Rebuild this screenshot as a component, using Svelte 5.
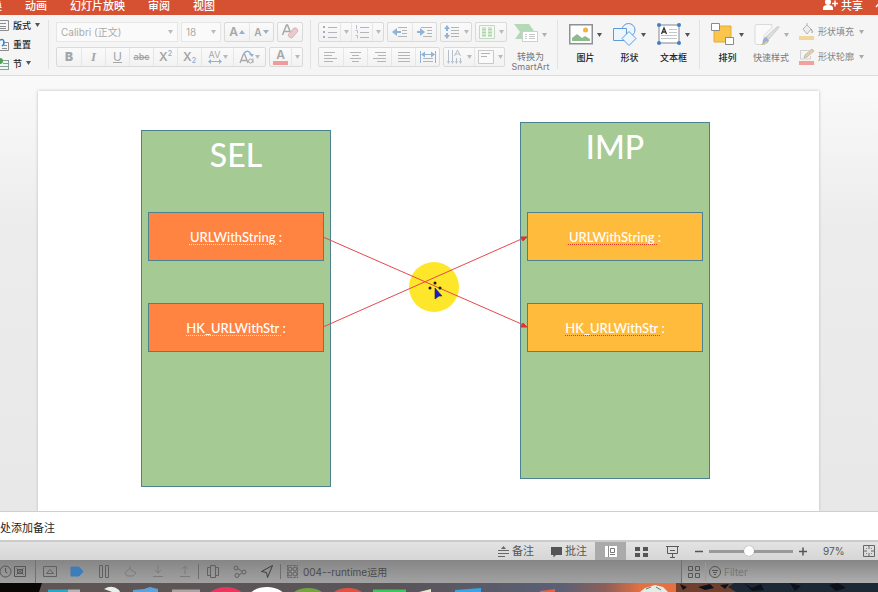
<script>
  let fontName = $state('Calibri (正文)');
  let fontSize = $state('18');
  let zoom = $state(47);
  let notes = $state('处添加备注');
  let filter = $state('');

  const tabs = ['切换', '动画', '幻灯片放映', '审阅', '视图'];

  const line = (y, a, b) => `<path d="M${a} ${y}H${b}" stroke="#b4b4b4"/>`;
  const lines = (rows) => rows.map(([y, a, b]) => line(y, a, b)).join('');
  const blue = '#8fb4d6';

  const alignTools = [
    { name: '左对齐', art: lines([[4.5, 2, 13], [7.5, 2, 10], [10.5, 2, 15], [13.5, 2, 11]]) },
    { name: '居中', art: lines([[4.5, 3, 14], [7.5, 5, 12], [10.5, 3, 14], [13.5, 5, 12]]) },
    { name: '右对齐', art: lines([[4.5, 4, 15], [7.5, 7, 15], [10.5, 2, 15], [13.5, 6, 15]]) },
    { name: '两端对齐', art: lines([[4.5, 3, 15], [7.5, 3, 15], [10.5, 3, 15], [13.5, 3, 15]]) },
    {
      name: '分散对齐',
      art: `<path d="M1.5 3v12M16.5 3v12M3 6.500h12" stroke="${blue}"/><path d="M2 6.500l4-3v6zM16 6.500l-4-3v6z" fill="${blue}"/>${lines([[10.5, 4, 14], [13.5, 4, 14]])}`
    }
  ];
  const bullets = `<path d="M2 3h2v2H2zM2 8h2v2H2zM2 13h2v2H2z" fill="#9fb0c4"/>${lines([[4.5, 7, 16], [9.5, 7, 16], [14.5, 7, 16]])}`;
  const numbers = `<path d="M3.500 2v4M2.500 7.500h2v3M2.500 12.500h2v3" stroke="#b4c0cf" fill="none"/>${lines([[4.5, 7, 16], [9.5, 7, 16], [14.5, 7, 16]])}`;
  const outdent = `<path d="M1 9l5-4v3h4v2H6v3z" fill="${blue}"/>${lines([[4.5, 7, 16], [7.5, 11, 16], [10.5, 11, 16], [13.5, 7, 16]])}`;
  const indent = `<path d="M9 9L4 5v3H1v2h3v3z" fill="${blue}"/>${lines([[4.5, 5, 16], [7.5, 11, 16], [10.5, 11, 16], [13.5, 7, 16]])}`;
  const spacing = `<path d="M4 2l3 4H5v2H3V6H1zM4 16l3-4H5v-2H3v2H1z" fill="${blue}"/>${lines([[4.5, 8, 16], [7.5, 8, 16], [10.5, 8, 16], [13.5, 8, 16]])}`;
  const columns = `<path d="M1.500 2.500h15v13h-15z" fill="#f4faf3" stroke="#c6d6c4"/><path d="M4 4h4v10H4zM10 4h4v10h-4z" fill="#cfe8cc"/><path d="M4 6.500h4M10 6.500h4M4 9.500h4M10 9.500h4M4 12.500h4M10 12.500h4" stroke="#b0d6ac"/>`;
  const direction = `<path d="M2.500 2v13M6.500 2v13M10.500 10v5M14.500 10v5M8.500 8l3-6 3 6M9.500 6h4" stroke="#b4bfcc" fill="none"/><path d="M1 13h3l-1.500 3zM5 13h3l-1.500 3zM9 13h3l-1.500 3zM13 13h3l-1.500 3z" fill="#b4bfcc"/>`;
  const anchor = `<path d="M1.500 2.500h15v13h-15z" fill="#fafafa" stroke="#c8c8c8"/>${lines([[5.5, 4, 13], [8.5, 4, 10]])}`;

  const insertTools = [
    {
      name: '图片',
      art: '<path d="M.75 1.750h22.500v19H.75z" fill="#fff" stroke="#8d9299" stroke-width="1.500"/><path d="M3 18v-3l5-4 5 4 3-2 5 3v2z" fill="#8fba8d"/><circle cx="16.500" cy="7" r="2.500" fill="#f3b23a"/>'
    },
    {
      name: '形状',
      art: '<g fill="#eef6fd" stroke="#5b9bd8"><circle cx="15.500" cy="7" r="6.500"/><path d="M.5 5.500h13v12H.5z"/><path d="M16 8.500l7 7-7 7-7-7z"/></g>'
    },
    {
      name: '文本框',
      art: '<path d="M2 2h20v18H2z" fill="#fff" stroke="#7b8794"/><path d="M12 6.500h8M12 9.500h8M4 12.500h16M4 15.500h16" stroke="#c4c8cc"/><path d="M4.500 11l2.500-6 2.500 6M5.500 9h3" stroke="#333" fill="none" stroke-width="1.300"/><g fill="#3f7fc4"><circle cx="2" cy="2" r="2"/><circle cx="22" cy="2" r="2"/><circle cx="2" cy="20" r="2"/><circle cx="22" cy="20" r="2"/></g>'
    }
  ];
  const arrange = '<path d="M3 3h17v16H3z" fill="#fac54d" stroke="#e6ac35"/><path d="M.5.5h8v7h-8zM14.500 14.500h8v7h-8z" fill="#fff" stroke="#8b8b8b"/>';
  const quick = '<path d="M3 1.500h15q-1 2 0 3l-8 8v9H3q-2 0-2-2v-16q0-2 2-2z" fill="#fafafa" stroke="#dadada"/><path d="M25 4.500L15 16l-3-2L23 4q2-1 2 .5z" fill="#dcdfdc" stroke="#c8ccc8"/><path d="M12 14l3 3q-1 5-8 5 2-2 2-5 1-3 3-3z" fill="#9bb0d6"/><path d="M7 22q3-1 5-4l2 1q-2 3-7 3z" fill="#e6cf7e"/>';
  const smart = '<path d="M0 1h15l5 7-5 2H9v6H1l5-7z" fill="#b4d9b6"/><path d="M8.500 8.500h15v10h-15z" fill="#fff" stroke="#cfcfcf"/><path d="M11 11.500h2M15 11.500h6M11 13.500h2M15 13.500h6M11 15.500h2M15 15.500h6" stroke="#c8c8c8"/>';

  const debugTools = [
    { name: '显示调试区', art: '<path d="M.5 2.500h13v10H.5z"/><path d="M3.500 9.500h7l-3.500-4z"/>' },
    { name: '断点', art: '<path d="M1 3h8l4 4.500L9 12H1z" fill="#3d7db8" stroke="#3d7db8"/>' },
    { name: '暂停', art: '<path d="M2.500 1.500h3v12h-3zM8.500 1.500h3v12h-3z"/>' },
    { name: '单步跳过', dim: true, art: '<path d="M1 9l5-5 1 2 5 3-3 3H3zM6 2v2"/>' },
    { name: '单步进入', dim: true, art: '<path d="M7 1v8M4 6l3 3 3-3M2 12.500h10"/>' },
    { name: '单步跳出', dim: true, art: '<path d="M7 10V2M4 5l3-3 3 3M2 12.500h10"/>' }
  ];
  const inspectTools = [
    { name: '视图层级', art: '<path d="M4.500 1.500h5v12h-5zM4 3.500H1.500v8H4M10 3.500h2.500v8H10"/>' },
    { name: '内存图', art: '<circle cx="3" cy="4" r="2"/><circle cx="11" cy="8" r="2"/><circle cx="4" cy="11.500" r="2"/><path d="M5 4.500l4 3M6 11l3-2"/>' },
    { name: '模拟位置', dark: true, art: '<path d="M12.500 1.500L1.500 7.500l5 1 1 5z"/>' }
  ];
</script>

{#snippet icon(art, w = 18, h = 18)}
  <svg width={w} height={h} viewBox="0 0 {w} {h}" fill="none" aria-hidden="true">{@html art}</svg>
{/snippet}

{#snippet caret()}
  <svg class="caret" width="5" height="4" viewBox="0 0 5 4" aria-hidden="true"><path d="M0 0h5L2.500 4z" fill="currentColor" /></svg>
{/snippet}

{#snippet big(name, art, w, off = false)}
  <button class="big" class:off>
    <span class="art">{@render icon(art, w, 23)}{@render caret()}</span>
    <span>{name}</span>
  </button>
{/snippet}

<div class="app">
  <header>
    <nav>
      {#each tabs as tab}<a href="#{tab}">{tab}</a>{/each}
    </nav>
    <button class="share">
      <svg width="15" height="12" viewBox="0 0 15 12" aria-hidden="true"><circle cx="5" cy="3" r="3" fill="#fff" /><path d="M0 11V9q0-3 5-3t5 3v2z" fill="#fff" /><path d="M9 4.500h6M12 1.500v6" stroke="#fff" stroke-width="1.500" /></svg>
      共享
    </button>
    <svg class="fold" width="9" height="8" viewBox="0 0 9 8" aria-hidden="true"><path d="M1 6l3.500-4L8 6" fill="none" stroke="#fff" stroke-width="1.500" /></svg>
  </header>

  <div class="ribbon">
    <div class="slides">
      <button>{@render icon('<path d="M0 1.500h8.500v10H0M0 4.500h6M0 7.500h6M0 9.500h6" stroke="#8d8d8d"/>', 9, 13)}版式{@render caret()}</button>
      <button>{@render icon('<path d="M3 4.500h5.500v8H0M4 7.500h3M2 10.500h5" stroke="#8d8d8d"/><path d="M0 2q4-2 4 3 0 2-2 3" stroke="#2c7fd0" stroke-width="1.500"/>', 9, 13)}重置</button>
      <button>{@render icon('<path d="M3 3.500h5.500M3 6.500h5.500M0 9.500h8.500M0 12.500h8.500M8.500 3v10" stroke="#7ba59a"/><circle cx="0" cy="4" r="3" fill="#4e9e55"/>', 9, 13)}节{@render caret()}</button>
    </div>
    <hr />

    <div class="tools">
      <div class="row">
        <label class="pick wide"><select bind:value={fontName} aria-label="字体"><option>Calibri (正文)</option></select>{@render caret()}</label>
        <label class="pick size"><select bind:value={fontSize} aria-label="字号"><option>18</option></select>{@render caret()}</label>
        <div class="set">
          <button class="letter" aria-label="增大字号">A<svg width="6" height="4" viewBox="0 0 6 4"><path d="M0 4h6L3 0z" fill="#8fb4d6" /></svg></button>
          <button class="letter small" aria-label="减小字号">A<svg width="6" height="4" viewBox="0 0 6 4"><path d="M0 0h6L3 4z" fill="#9fb0c4" /></svg></button>
        </div>
        <div class="set"><button aria-label="清除格式">{@render icon('<path d="M1.500 12L5.500 2h1l4 10M3 8.500h6" stroke="#a8a8a8" stroke-width="1.500"/><path d="M7 12l6-7q3-1 4 3l-6 7q-3 0-4-3z" fill="#ecc9cc" stroke="#d9b3b6"/>')}</button></div>
      </div>
      <div class="row">
        <div class="set">
          <button class="letter"><b>B</b></button>
          <button class="letter serif"><i>I</i></button>
          <button class="letter"><u>U</u></button>
          <button class="letter tiny"><s>abc</s></button>
          <button class="letter">X<sup>2</sup></button>
          <button class="letter">X<sub>2</sub></button>
          <button class="letter drop" aria-label="字符间距"><span class="av">AV{@render icon('<path d="M2 2.500h10" stroke="#8fb4d6"/><path d="M0 2.500L3 0v5zM14 2.500L11 0v5z" fill="#8fb4d6"/>', 14, 5)}</span>{@render caret()}</button>
          <button class="letter drop" aria-label="更改大小写">{@render icon('<path d="M1 14L4.500 5h1L9 14M2 11.500h6" stroke="#a8a8a8" stroke-width="1.300"/><path d="M5 4q4-4 7 1" stroke="#8fb4d6" stroke-width="1.500"/><path d="M10 5h5l-2 3z" fill="#8fb4d6"/><circle cx="11.500" cy="12" r="2" stroke="#a8a8a8"/><path d="M14 9.500V14" stroke="#a8a8a8"/>', 15, 16)}{@render caret()}</button>
        </div>
        <div class="set"><button class="letter split" aria-label="字体颜色"><span class="ink">A</span></button><button class="arrow" aria-label="更多颜色">{@render caret()}</button></div>
      </div>
    </div>
    <hr />

    <div class="tools">
      <div class="row">
        <div class="set">
          <button class="narrow" aria-label="项目符号">{@render icon(bullets)}</button><button class="arrow" aria-label="更多符号">{@render caret()}</button>
          <button class="narrow" aria-label="编号">{@render icon(numbers)}</button><button class="arrow" aria-label="更多编号">{@render caret()}</button>
        </div>
        <div class="set">
          <button aria-label="减少缩进">{@render icon(outdent)}</button>
          <button aria-label="增加缩进">{@render icon(indent)}</button>
        </div>
        <div class="set"><button class="drop" aria-label="行距">{@render icon(spacing)}{@render caret()}</button></div>
        <div class="set"><button class="drop" aria-label="分栏">{@render icon(columns)}{@render caret()}</button></div>
      </div>
      <div class="row">
        <div class="set">
          {#each alignTools as t}<button aria-label={t.name}>{@render icon(t.art)}</button>{/each}
        </div>
        <div class="set">
          <button class="drop" aria-label="文字方向">{@render icon(direction)}{@render caret()}</button>
          <button class="drop" aria-label="对齐文本">{@render icon(anchor)}{@render caret()}</button>
        </div>
      </div>
    </div>
    <button class="big off smart">
      <span class="art">{@render icon(smart, 24, 23)}{@render caret()}</span>
      <span>转换为<br />SmartArt</span>
    </button>
    <hr />

    <div class="group">
      {#each insertTools as t}{@render big(t.name, t.art, 24)}{/each}
    </div>
    <hr />

    <div class="group tight">
      {@render big('排列', arrange, 24)}
      {@render big('快速样式', quick, 26, true)}
    </div>
    <div class="paint">
      <button>{@render icon('<path d="M4 6l4-4 4 4-4 5zM8 2V0" fill="#eee" stroke="#b5b5b5"/><path d="M12 6q2 2 1 4" stroke="#8b9aa8"/><path d="M0 13h15v4H0z" fill="#f2d79b"/>', 15, 17)}形状填充{@render caret()}</button>
      <button>{@render icon('<path d="M2 2.500h9M1.500 2v9h10V8" stroke="#d2d2d2"/><path d="M5 10l1-3 7-6 2 2-7 6z" fill="#e6cdb0" stroke="#c9bbac"/><path d="M0 13h15v4H0z" fill="#f1a09a"/>', 15, 17)}形状轮廓{@render caret()}</button>
    </div>
  </div>

  <main>
    <div class="slide">
      <div class="column sel"><h2>SEL</h2></div>
      <div class="column imp"><h2>IMP</h2></div>
      <div class="node a"><p><span>URLWithString&nbsp;</span>:</p></div>
      <div class="node b"><p><span>HK_URLWithStr&nbsp;</span>:</p></div>
      <div class="node c"><p><span>URLWithString&nbsp;</span>:</p></div>
      <div class="node d"><p><span>HK_URLWithStr&nbsp;</span>:</p></div>
      <svg class="wires" width="781" height="420" viewBox="0 0 781 420" aria-hidden="true">
        <circle cx="396" cy="196" r="25" fill="#fee62b" />
        <g stroke="#e5484d" fill="none"><path d="M285 146l203 89M285 236l203-90" /></g>
        <path d="M489 236l-4-4-2 4zM489 146l-6 0 2 4z" fill="#e0322f" stroke="#e0322f" />
        <g fill="#1c1c1c"><circle cx="397" cy="192" r="1.500" /><circle cx="392" cy="197" r="1.500" /><circle cx="402" cy="197" r="1.500" /></g>
        <path d="M397 197l7 8-3 0-4 3z" fill="#1520c8" stroke="#1c1c6a" stroke-width=".6" />
      </svg>
    </div>
  </main>

  <textarea class="notes" aria-label="备注" rows="1" bind:value={notes}></textarea>

  <footer>
    <button class="text">{@render icon('<path d="M0 5.500h11M0 8.500h11M0 11.500h7" stroke="#666"/><path d="M3 4l2.500-3L8 4z" fill="#666"/>', 11, 13)}备注</button>
    <button class="text">{@render icon('<path d="M0 2h11v8H5l-2.500 2.500V10H0z" fill="#555"/>', 11, 13)}批注</button>
    <div class="views">
      <button class="on" aria-label="普通视图">{@render icon('<path d="M0 1h12v11H0z" fill="#fff"/><path d="M3.500 1v11" stroke="#8d8d8d"/><path d="M5.500 3.500h4v4h-4zM5 9.500h5" stroke="#777"/>', 12, 13)}</button>
      <button aria-label="幻灯片浏览">{@render icon('<path d="M0 2h5v4H0zM8 2h5v4H8zM0 8h5v4H0zM8 8h5v4H8z" fill="#555"/>', 13, 13)}</button>
      <button aria-label="放映">{@render icon('<path d="M0 1.500h13M1.500 2v6.500h10V2M4 5.500h5M6.500 9v3M4 12.500h5" stroke="#5a5a5a"/>', 13, 13)}</button>
    </div>
    <div class="zoom">
      <button aria-label="缩小">{@render icon('<path d="M0 4.500h8" stroke="#555" stroke-width="1.500"/>', 8, 9)}</button>
      <input type="range" aria-label="缩放" min="0" max="100" bind:value={zoom} />
      <button aria-label="放大">{@render icon('<path d="M0 4.500h8M4 .5v8" stroke="#555" stroke-width="1.500"/>', 8, 9)}</button>
    </div>
    <span class="percent">97%</span>
    <button aria-label="适应窗口">{@render icon('<path d="M.5.5h11v11H.5zM6 1v3M6 8v3M1 6h3M8 6h3" stroke="#666"/><path d="M3 3l1 1M9 3L8 4M3 9l1-1M9 9L8 8" stroke="#888"/>', 12, 12)}</button>
  </footer>

  <div class="debug">
    <div class="nav">
      {@render icon('<circle cx="5.500" cy="7.500" r="5.500" stroke="#555"/><path d="M5.500 4v4l2 1" stroke="#555"/>', 12, 15)}
      {@render icon('<path d="M.5 2.500h11v10H.5zM2.500 4.500l7 6M9.500 4.500l-7 6M3.500 5.500h5v4h-5z" stroke="#555"/>', 12, 15)}
    </div>
    <div class="cells">{#each debugTools as t}<button class:dim={t.dim} aria-label={t.name}>{@render icon(t.art, 14, 15)}</button>{/each}</div>
    <div class="cells ruled">{#each inspectTools as t}<button class:dark={t.dark} aria-label={t.name}>{@render icon(t.art, 14, 15)}</button>{/each}</div>
    <div class="process">
      {@render icon('<path d="M1.500 1.500h10v12h-10z" stroke-dasharray="2 1"/><circle cx="4" cy="5" r="2"/><circle cx="9" cy="5" r="2"/><circle cx="4" cy="10" r="2"/><circle cx="9" cy="10" r="2"/>', 13, 15)}
      <span>004--runtime运用</span>
    </div>
    <div class="library">
      {@render icon('<path d="M.5 1.500h4v4h-4zM7.500 1.500h4v4h-4zM.5 8.500h4v4h-4zM7.500 8.500h4v4h-4z" stroke="#555"/>', 12, 14)}
      <label>
        {@render icon('<circle cx="6" cy="6" r="5.500" stroke="#555"/><path d="M3 4.500h6M4 6.500h4M5 8.500h2" stroke="#555"/>', 12, 12)}
        <input type="text" placeholder="Filter" aria-label="Filter" bind:value={filter} />
      </label>
    </div>
  </div>

  <svg class="dock" viewBox="0 0 878 9" preserveAspectRatio="none" aria-hidden="true">
    <defs>
      <linearGradient id="desk"><stop offset="0" stop-color="#5f5553" /><stop offset=".45" stop-color="#5a5459" /><stop offset=".64" stop-color="#5b6076" /><stop offset=".69" stop-color="#8c5f58" /><stop offset=".73" stop-color="#e57142" /></linearGradient>
    </defs>
    <path d="M0 0h878v9H0z" fill="url(#desk)" />
    <path d="M0 0h42l-3 9H0z" fill="#090807" />
    <path d="M676 0h202v9H676z" fill="#1d2837" />
    <path d="M676 0h58l-6 4 8 5h-60z" fill="#70402f" />
    <path d="M680 1l7 3-4 3zM698 4l12-3 4 4-9 2zM720 2l9-1-4 5zM744 0l8 5 9-4 3 6-12 1zM790 0l11 3-6 5zM829 2l9-2 8 5-10 3z" fill="#0d1119" />
    <path d="M48 6.500h20V9H48z" fill="#28a7c9" /><path d="M68 6.500h12V9H68z" fill="#b4b4b4" />
    <path d="M104 6q8-5 15 1l1 2h-8z" fill="#eceff0" />
    <path d="M133 7l11-1 6-2 8 2v3h-25z" fill="#5ba3dc" />
    <path d="M172 6.500h28V9h-28z" fill="#aaa5a4" />
    <ellipse cx="226" cy="16" rx="19" ry="12" fill="#ed365f" />
    <ellipse cx="267" cy="16" rx="19" ry="12" fill="#fff" />
    <ellipse cx="308" cy="16" rx="18" ry="11" fill="#73a441" />
    <ellipse cx="348" cy="16" rx="18" ry="11" fill="#e35240" />
    <path d="M373 6.500h33V9h-33z" fill="#39c85b" />
    <path d="M419 9l12-3v3z" fill="#ebe8c8" />
    <path d="M455 7l26-2v4h-26z" fill="#38a6e6" />
    <path d="M540 8l15-2v3h-15z" fill="#e66242" />
    <path d="M640 9l5-4 10-3 8 2 5 5z" fill="#e7ebe5" /><path d="M646 6l5-2M656 4l5 3" stroke="#5b7e73" />
  </svg>
</div>

<style>
  :global(body) { margin: 0; }
  .app {
    display: flex; flex-direction: column; height: 100vh; overflow: hidden;
    font-family: Inter, "Noto Sans CJK SC", sans-serif; font-size: 9px; color: #333;
  }
  button { display: flex; align-items: center; justify-content: center; margin: 0; padding: 0; border: 0; background: none; font: inherit; color: inherit; white-space: nowrap; }
  svg { display: block; flex: none; }

  header { display: flex; align-items: center; flex: none; height: 15px; padding-bottom: 6px; box-sizing: border-box; background: #d65131; color: #fff; overflow: hidden; font-size: 11px; font-weight: 500; }
  nav { display: flex; gap: 23px; margin-left: -20px; margin-right: auto; }
  nav a { color: inherit; text-decoration: none; white-space: nowrap; }
  .share { gap: 3px; }
  .fold { margin: 0 -6px 0 12px; }

  .ribbon { display: flex; flex: none; align-items: center; height: 58px; padding-bottom: 2px; background: #f5f5f5; border-bottom: 1px solid #dcdcdc; overflow: hidden; }
  hr { flex: none; width: 1px; height: 49px; margin: 0 7px; border: 0; background: #e2e2e2; }
  .slides { display: flex; flex-direction: column; gap: 6px; width: 41px; flex: none; color: #222; font-weight: 500; }
  .slides button { gap: 4px; justify-content: flex-start; height: 13px; }
  .caret { color: #555; }
  .tools { display: flex; flex-direction: column; gap: 5px; flex: none; }
  .tools .caret { color: #bababa; }
  .row { display: flex; gap: 3px; }
  .set { display: flex; height: 20px; box-sizing: border-box; border: 1px solid #dadada; border-radius: 2px; background: linear-gradient(#fafafa, #f2f2f2); }
  .set button { width: 24px; border-left: 1px solid #e6e6e6; box-sizing: border-box; }
  .set button:first-child { border-left: 0; }
  .set .narrow { width: 21px; }
  .set .arrow { width: 11px; }
  .set .drop { width: 30px; gap: 3px; }
  .set .letter.drop { width: 32px; }
  .pick { display: flex; align-items: center; height: 20px; box-sizing: border-box; padding: 0 4px; border: 1px solid #e6e6e6; background: #fafafa; }
  .pick select { flex: 1; min-width: 0; appearance: none; border: 0; padding: 0; background: none; font: inherit; font-size: 10px; color: #ababab; }
  .wide { width: 122px; }
  .size { width: 40px; }
  .letter { color: #a6a6a6; font-size: 12px; font-weight: 600; }
  .set .letter.split { width: 21px; }
  .small { font-size: 10px; }
  .letter:has(> svg:last-child) { gap: 1px; }
  .tiny { font-size: 9px; }
  .serif { font-family: "Liberation Serif", serif; font-size: 13px; }
  .letter sup, .letter sub { font-size: 7px; line-height: 7px; color: #8fb4d6; }
  .letter sup { align-self: flex-start; margin-top: 2px; }
  .letter sub { align-self: flex-end; margin-bottom: 2px; }
  .letter u { font-weight: 400; }
  .av { display: flex; flex-direction: column; align-items: center; font-size: 9px; line-height: 9px; font-weight: 400; }
  .ink { width: 15px; line-height: 12px; border-bottom: 4px solid #f19a9c; }

  .big { flex-direction: column; align-self: flex-start; justify-content: flex-start; padding-top: 8px; color: #222; font-weight: 500; line-height: 11px; gap: 6px; }
  .big .art { display: flex; align-items: center; gap: 4px; }
  .off { color: #777; font-weight: 400; }
  .off .caret { color: #b0b0b0; }
  .smart { width: 39px; margin-left: 4px; line-height: 10px; }
  .group { display: flex; align-self: flex-start; gap: 11px; margin: 0 2px 0 4px; }
  .tight { gap: 9px; }
  .paint { display: flex; flex-direction: column; gap: 8px; margin-left: 8px; color: #858585; }
  .paint button { gap: 4px; }
  .paint .caret { color: #aaa; margin-left: 1px; }

  main { flex: 1; min-height: 0; display: flex; padding: 15px 59px 0 38px; background: linear-gradient(#fafafa, #ececec 35%, #e8e8e8); overflow: hidden; }
  .slide { flex: 1; position: relative; background: #fff; box-shadow: 0 0 3px #bbb; }
  .column, .node { position: absolute; box-sizing: border-box; border: 1px solid #4b8191; font-family: Lato, sans-serif; color: #fff; }
  .column { width: 190px; height: 357px; background: #a5ca94; }
  .column h2 { margin: 4px 0 0; text-align: center; font-size: 32px; line-height: 40px; font-weight: 500; }
  .sel { left: 103px; top: 39px; }
  .imp { left: 482px; top: 31px; }
  .node { display: flex; align-items: center; justify-content: center; width: 176px; height: 49px; font-size: 13px; font-weight: 500; }
  .node p { margin: 0; line-height: 18px; }
  .node span { text-decoration: underline dotted #e8392f 1px; text-underline-offset: 2px; text-decoration-skip-ink: none; }
  .a, .b { left: 110px; background: #ff8341; }
  .a span, .b span { text-decoration-color: #ffd9cc; }
  .c, .d { left: 489px; background: #ffbc3c; }
  .a, .c { top: 121px; }
  .b, .d { top: 212px; }
  .wires { position: absolute; left: 0; top: 0; }

  .notes { flex: none; display: block; height: 29px; box-sizing: border-box; margin: 0; padding: 7px 0 0; border: 0; border-top: 1px solid #cfcfcf; resize: none; overflow: hidden; font: 11px/16px "Noto Sans CJK SC", sans-serif; color: #222; background: #fff; }

  footer { flex: none; display: flex; align-items: center; justify-content: flex-end; height: 20px; box-sizing: border-box; padding-right: 3px; border-top: 2px solid #cbcbcb; background: linear-gradient(#e3e3e3, #d6d6d6); color: #555; font-size: 10px; }
  .text { gap: 3px; margin-right: 17px; font-size: 11px; line-height: 14px; }
  .text + .views { margin-left: -9px; }
  .views { display: flex; align-self: stretch; margin-right: 7px; }
  .views button { width: 31px; }
  .views .on { background: #aaa; }
  .zoom { display: flex; align-items: center; gap: 6px; }
  .zoom input { appearance: none; width: 84px; height: 11px; margin: 0; background: linear-gradient(#999, #999) center / 100% 3px no-repeat; }
  .zoom input::-webkit-slider-thumb { appearance: none; width: 10px; height: 10px; border-radius: 50%; background: #fff; box-shadow: 0 0 1px #777; }
  .percent { width: 22px; margin: 0 18px 0 16px; white-space: nowrap; }

  .debug { flex: none; display: flex; align-items: center; height: 23px; background: linear-gradient(#858585, #a2a2a2); color: #4a4a4a; font-size: 10px; overflow: hidden; }
  .debug .nav { display: flex; align-items: center; gap: 2px; width: 35px; height: 23px; border-right: 1px solid #707070; }
  .cells { display: flex; }
  .cells button { width: 27px; height: 15px; }
  .debug svg { stroke: #606060; }
  .debug .dim svg { stroke: #7b7b7b; }
  .debug .dark svg { stroke: #3c3c3c; }
  .ruled { border-left: 1px solid #6d6d6d; border-right: 1px solid #6d6d6d; }
  .process { display: flex; align-items: center; gap: 4px; margin-left: 5px; white-space: nowrap; }
  .library { display: flex; flex: none; align-items: center; gap: 5px; width: 197px; height: 23px; margin-left: auto; padding-left: 6px; box-sizing: border-box; border-left: 1px solid #707070; background: linear-gradient(#858585, #aeaeae); }
  .library label { flex: 1; display: flex; align-items: center; gap: 3px; height: 19px; padding-left: 3px; border-left: 1px solid #999; }
  .library input { flex: 1; min-width: 0; border: 0; padding: 0; background: none; outline: 0; font: inherit; }
  .library input::placeholder { color: #757575; }
  .dock { width: 100%; height: 9px; }
</style>
